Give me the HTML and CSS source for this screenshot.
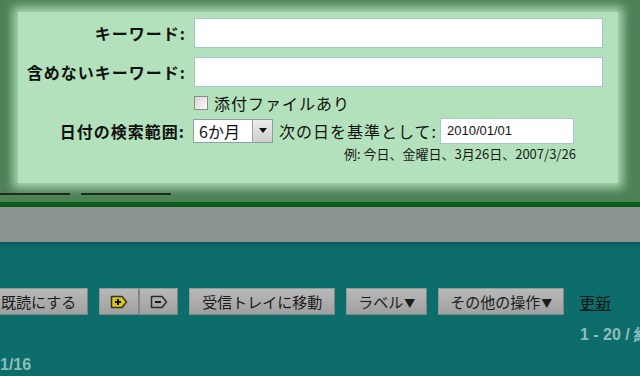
FILE: index.html
```html
<!DOCTYPE html>
<html lang="ja">

<head>
    <meta charset="UTF-8">
    <title>検索オプション</title>
    <link rel="stylesheet" href="styles.css">
</head>

<body>

    <!-- Search options popup -->
    <div class="popup-area">
        <div class="search-panel">
            <div class="form-row row-input">
                <label class="field-label">キーワード:</label>
                <input class="text-input" type="text">
            </div>
            <div class="form-row row-input">
                <label class="field-label">含めないキーワード:</label>
                <input class="text-input" type="text">
            </div>
            <div class="form-row row-check">
                <span class="field-label"></span>
                <span class="checkbox"></span>
                <span class="plain-text">添付ファイルあり</span>
            </div>
            <div class="form-row row-date">
                <label class="field-label">日付の検索範囲:</label>
                <div class="select-box">
                    <span class="select-value">6か月</span>
                    <span class="select-arrow"><span class="tri"></span></span>
                </div>
                <span class="plain-text date-caption">次の日を基準として:</span>
                <div class="date-input">2010/01/01</div>
            </div>
            <div class="hint">例: 今日、金曜日、3月26日、2007/3/26</div>
        </div>
        <div class="tab-lines">
            <span class="tab-line first"></span>
            <span class="tab-line second"></span>
        </div>
    </div>

    <div class="green-rule"></div>
    <div class="gray-band"></div>

    <!-- Mail toolbar (dimmed) -->
    <div class="mail-area">
        <div class="toolbar">
            <button class="btn">既読にする</button>
            <div class="btn-group">
                <button class="btn btn-icon">
                    <svg width="18" height="14" viewBox="0 0 18 14">
                        <path d="M1.5 1.5 H12 L16.5 7 L12 12.5 H1.5 Z" fill="#d8c21c" stroke="#3a3410" stroke-width="1.5" stroke-linejoin="round"/>
                        <path d="M8 4 V10 M5 7 H11" stroke="#111" stroke-width="2"/>
                    </svg>
                </button>
                <button class="btn btn-icon">
                    <svg width="18" height="14" viewBox="0 0 18 14">
                        <path d="M1.5 1.5 H12 L16.5 7 L12 12.5 H1.5 Z" fill="none" stroke="#2a2a2a" stroke-width="1.5" stroke-linejoin="round"/>
                        <path d="M5 7 H11" stroke="#111" stroke-width="2"/>
                    </svg>
                </button>
            </div>
            <button class="btn btn-move">受信トレイに移動</button>
            <button class="btn">ラベル<span class="arrow">▼</span></button>
            <button class="btn">その他の操作<span class="arrow">▼</span></button>
            <a class="refresh-link" href="#">更新</a>
        </div>
        <div class="count-row">1 - 20 / 約</div>
        <div class="date-row">1/16</div>
    </div>

</body>

</html>
```

FILE: styles.css
```css
/* General Styling */
body {
    margin: 0;
    padding: 0;
    width: 640px;
    height: 376px;
    overflow: hidden;
    font-family: "Noto Sans CJK JP", "Liberation Sans", sans-serif;
    background-color: #0c6d6a;
}

/* Popup area */
.popup-area {
    height: 201px;
    background-color: #4f8157;
    padding-top: 12px;
    box-sizing: border-box;
    overflow: hidden;
}

.search-panel {
    margin-left: 18px;
    width: 600px;
    height: 171px;
    padding-top: 6px;
    box-sizing: border-box;
    background-color: #b2e1bb;
    box-shadow: 0 0 9px 5px #a8d8b1;
}

.form-row {
    display: flex;
    align-items: center;
}

.field-label {
    width: 176px;
    flex-shrink: 0;
    text-align: right;
    padding-right: 8px;
    box-sizing: border-box;
    font-size: 16px;
    font-weight: bold;
    letter-spacing: 1px;
    color: #111;
    line-height: 20px;
}

.row-input {
    height: 30px;
    margin-bottom: 9px;
}

.text-input {
    width: 409px;
    height: 30px;
    box-sizing: border-box;
    border: 1px solid #9fc6c9;
    background: white;
    margin: 0;
    padding: 0 4px;
}

.row-check {
    height: 22px;
    margin-top: -4px;
    margin-bottom: 3px;
}

.checkbox {
    width: 12px;
    height: 12px;
    border: 1px solid #8a8a8a;
    background: linear-gradient(135deg, #d8d8d8, #fafafa);
    margin-right: 6px;
}

.plain-text {
    font-size: 16px;
    letter-spacing: 1px;
    color: #111;
    line-height: 20px;
}

.row-date {
    height: 27px;
}

.row-date .field-label {
    width: 175px;
}

.select-box {
    display: flex;
    width: 80px;
    height: 24px;
    box-sizing: border-box;
    border: 1px solid #8aa2a4;
    background: white;
}

.select-value {
    flex: 1;
    font-size: 16px;
    line-height: 22px;
    padding-left: 5px;
    color: #111;
}

.select-arrow {
    width: 19px;
    border-left: 1px solid #9aa0a0;
    background: linear-gradient(#ececec, #cfcfcf);
    display: flex;
    align-items: center;
    justify-content: center;
}

.tri {
    width: 0;
    height: 0;
    border-left: 4px solid transparent;
    border-right: 4px solid transparent;
    border-top: 5px solid #111;
}

.date-caption {
    margin-left: 6px;
    margin-right: 3px;
}

.date-input {
    width: 134px;
    height: 26px;
    box-sizing: border-box;
    border: 1px solid #a6c9cc;
    background: white;
    font-family: "Liberation Sans", sans-serif;
    font-size: 13px;
    line-height: 24px;
    padding-left: 6px;
    color: #111;
}

.hint {
    margin-left: 326px;
    margin-top: 2px;
    font-size: 13px;
    line-height: 16px;
    color: #1a1a1a;
}

/* Tab underlines below the popup */
.tab-lines {
    display: flex;
    gap: 11px;
    margin-top: 10px;
}

.tab-line {
    height: 2px;
    background-color: #1b2e1d;
}

.tab-line.first {
    width: 70px;
}

.tab-line.second {
    width: 90px;
}

.green-rule {
    height: 6px;
    background-color: #0d5b1c;
    border-top: 1px solid #3e8b45;
    box-sizing: border-box;
}

.gray-band {
    height: 35px;
    background-color: #8a9591;
}

/* Mail area */
.mail-area {
    background: linear-gradient(#0a5c5a, #0c6d6a 8px);
    height: 134px;
    padding-top: 46px;
    box-sizing: border-box;
}

.toolbar {
    display: flex;
    align-items: center;
    gap: 11px;
    margin-left: -11px;
}

.btn {
    height: 27px;
    padding: 0 11px;
    font-family: "Noto Sans CJK JP", "Liberation Sans", sans-serif;
    font-size: 15px;
    color: #1c1c1c;
    background: linear-gradient(#b9b9b9, #a0a0a0);
    border: 1px solid #8f9a9a;
    border-right-color: #7c8585;
    border-bottom-color: #7c8585;
    box-sizing: border-box;
    line-height: 25px;
    margin: 0;
}

.btn-move {
    padding: 0 12px;
}

.btn .arrow {
    font-size: 11px;
    margin-left: 1px;
}

.btn-group {
    display: flex;
}

.btn-icon {
    width: 40px;
    padding: 0;
    display: flex;
    align-items: center;
    justify-content: center;
}

.btn-icon + .btn-icon {
    width: 39px;
    border-left-color: #8a8a8a;
}

.refresh-link {
    margin-left: 4px;
    font-size: 16px;
    color: #0d1a1a;
    text-decoration: underline;
}

.count-row {
    margin-top: 10px;
    margin-left: 580px;
    font-family: "Liberation Sans", sans-serif;
    font-weight: bold;
    font-size: 16px;
    color: #8dbdb8;
    white-space: nowrap;
}

.date-row {
    margin-top: 10px;
    font-family: "Liberation Sans", sans-serif;
    font-weight: bold;
    font-size: 16px;
    color: #8dbdb8;
}
```
